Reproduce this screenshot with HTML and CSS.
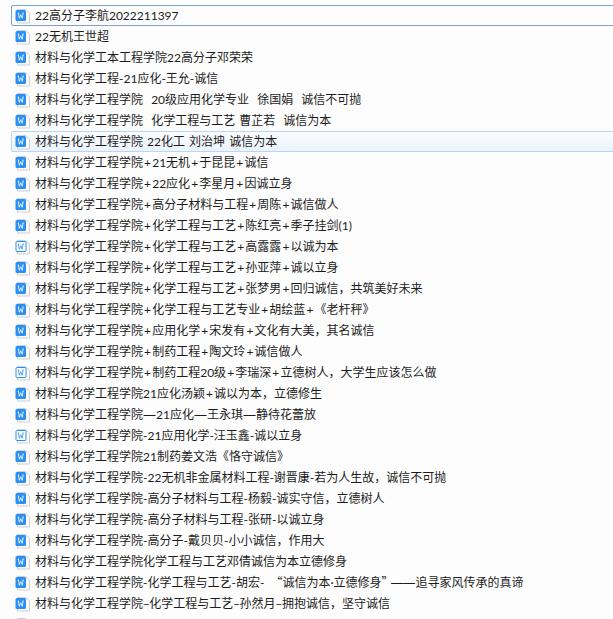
FILE: index.html
```html
<!DOCTYPE html>
<html lang="zh-CN">
<head>
<meta charset="utf-8">
<title>文件列表</title>
<link rel="stylesheet" href="styles.css">
</head>
<body>
<svg class="defs" width="0" height="0" aria-hidden="true">
  <symbol id="doc" viewBox="0 0 16 16">
    <path d="M2.500 1.500H10.500L14.500 5V15H2.500Z" fill="#fbfbfb" stroke="#cdd0d4"/>
    <rect x=".5" y="2" width="10.500" height="11" rx="1.500" fill="#2a8ff1"/>
    <path d="M2.800 5H4M7.500 5H8.700M3.400 5L4.300 10.300L5.750 6.600L7.200 10.300L8.100 5" fill="none" stroke="#fff" stroke-width=".8"/>
  </symbol>
  <symbol id="doc-outline" viewBox="0 0 16 16">
    <path d="M2.500 1.500H10.500L14.500 5V15H2.500Z" fill="#fbfbfb" stroke="#cdd0d4"/>
    <rect x="1" y="2.500" width="10" height="10" rx="1" fill="#fff" stroke="#2a8ff1"/>
    <path d="M2.800 5H4M7.500 5H8.700M3.400 5L4.300 10.300L5.750 6.600L7.200 10.300L8.100 5" fill="none" stroke="#2a8ff1" stroke-width=".8"/>
  </symbol>
</svg>
<ul class="list">
<li class="row focused"><svg class="icon"><use href="#doc"/></svg><span>22高分子李航2022211397</span></li>
<li class="row"><svg class="icon"><use href="#doc"/></svg><span>22无机王世超</span></li>
<li class="row"><svg class="icon"><use href="#doc"/></svg><span>材料与化学工本工程学院22高分子邓荣荣</span></li>
<li class="row"><svg class="icon"><use href="#doc"/></svg><span>材料与化学工程-21应化-王允-诚信</span></li>
<li class="row"><svg class="icon"><use href="#doc"/></svg><span>材料与化学工程学院&nbsp;&nbsp;20级应用化学专业&nbsp;&nbsp;徐国娟&nbsp;&nbsp;诚信不可抛</span></li>
<li class="row"><svg class="icon"><use href="#doc"/></svg><span>材料与化学工程学院&nbsp;&nbsp;化学工程与工艺 曹芷若&nbsp;&nbsp;诚信为本</span></li>
<li class="row hover"><svg class="icon"><use href="#doc"/></svg><span>材料与化学工程学院 22化工 刘治坤 诚信为本</span></li>
<li class="row"><svg class="icon"><use href="#doc"/></svg><span>材料与化学工程学院<i class="plus">+</i>21无机<i class="plus">+</i>于昆昆<i class="plus">+</i>诚信</span></li>
<li class="row"><svg class="icon"><use href="#doc"/></svg><span>材料与化学工程学院<i class="plus">+</i>22应化<i class="plus">+</i>李星月<i class="plus">+</i>因诚立身</span></li>
<li class="row"><svg class="icon"><use href="#doc"/></svg><span>材料与化学工程学院<i class="plus">+</i>高分子材料与工程<i class="plus">+</i>周陈<i class="plus">+</i>诚信做人</span></li>
<li class="row"><svg class="icon"><use href="#doc"/></svg><span>材料与化学工程学院<i class="plus">+</i>化学工程与工艺<i class="plus">+</i>陈红亮<i class="plus">+</i>季子挂剑(1)</span></li>
<li class="row"><svg class="icon"><use href="#doc-outline"/></svg><span>材料与化学工程学院<i class="plus">+</i>化学工程与工艺<i class="plus">+</i>高露露<i class="plus">+</i>以诚为本</span></li>
<li class="row"><svg class="icon"><use href="#doc"/></svg><span>材料与化学工程学院<i class="plus">+</i>化学工程与工艺<i class="plus">+</i>孙亚萍<i class="plus">+</i>诚以立身</span></li>
<li class="row"><svg class="icon"><use href="#doc"/></svg><span>材料与化学工程学院<i class="plus">+</i>化学工程与工艺<i class="plus">+</i>张梦男<i class="plus">+</i>回归诚信，共筑美好未来</span></li>
<li class="row"><svg class="icon"><use href="#doc"/></svg><span>材料与化学工程学院<i class="plus">+</i>化学工程与工艺专业<i class="plus">+</i>胡绘蓝<i class="plus">+</i>《老杆秤》</span></li>
<li class="row"><svg class="icon"><use href="#doc"/></svg><span>材料与化学工程学院<i class="plus">+</i>应用化学<i class="plus">+</i>宋发有<i class="plus">+</i>文化有大美，其名诚信</span></li>
<li class="row"><svg class="icon"><use href="#doc"/></svg><span>材料与化学工程学院<i class="plus">+</i>制药工程<i class="plus">+</i>陶文玲<i class="plus">+</i>诚信做人</span></li>
<li class="row"><svg class="icon"><use href="#doc-outline"/></svg><span>材料与化学工程学院<i class="plus">+</i>制药工程20级<i class="plus">+</i>李瑞深<i class="plus">+</i>立德树人，大学生应该怎么做</span></li>
<li class="row"><svg class="icon"><use href="#doc"/></svg><span>材料与化学工程学院21应化汤颖<i class="plus">+</i>诚以为本，立德修生</span></li>
<li class="row"><svg class="icon"><use href="#doc"/></svg><span>材料与化学工程学院<i class="dash">—</i>21应化<i class="dash">—</i>王永琪<i class="dash">—</i>静待花蕾放</span></li>
<li class="row"><svg class="icon"><use href="#doc-outline"/></svg><span>材料与化学工程学院-21应用化学-汪玉鑫-诚以立身</span></li>
<li class="row"><svg class="icon"><use href="#doc"/></svg><span>材料与化学工程学院21制药姜文浩《恪守诚信》</span></li>
<li class="row"><svg class="icon"><use href="#doc"/></svg><span>材料与化学工程学院-22无机非金属材料工程-谢晋康-若为人生故，诚信不可抛</span></li>
<li class="row"><svg class="icon"><use href="#doc"/></svg><span>材料与化学工程学院-高分子材料与工程-杨毅-诚实守信，立德树人</span></li>
<li class="row"><svg class="icon"><use href="#doc"/></svg><span>材料与化学工程学院-高分子材料与工程-张研-以诚立身</span></li>
<li class="row"><svg class="icon"><use href="#doc"/></svg><span>材料与化学工程学院-高分子-戴贝贝-小小诚信，作用大</span></li>
<li class="row"><svg class="icon"><use href="#doc"/></svg><span>材料与化学工程学院化学工程与工艺邓倩诚信为本立德修身</span></li>
<li class="row"><svg class="icon"><use href="#doc"/></svg><span>材料与化学工程学院-化学工程与工艺-胡宏-<i class="quote open">“</i>诚信为本·立德修身<i class="quote close">”</i><i class="dash">——</i>追寻家风传承的真谛</span></li>
<li class="row"><svg class="icon"><use href="#doc"/></svg><span>材料与化学工程学院<i class="en">–</i>化学工程与工艺<i class="en">–</i>孙然月<i class="en">–</i>拥抱诚信，坚守诚信</span></li>
<li class="row"><svg class="icon"><use href="#doc"/></svg><span></span></li>
</ul>
</body>
</html>
```

FILE: styles.css
```css
html, body {
  margin: 0;
  height: 100%;
  overflow: hidden;
  background: #fdfdfd;
}

.defs {
  display: block;
  height: 0;
}

.list {
  list-style: none;
  margin: 0 -8px 0 0;
  padding: 5px 0 0 11px;
  font: 12px/19px Lato, "Noto Sans CJK SC", sans-serif;
  word-spacing: 1px;
  text-spacing-trim: space-all;
  color: #1c1c1c;
}

.row {
  box-sizing: border-box;
  display: flex;
  align-items: center;
  gap: 4px;
  height: 21px;
  padding-left: 3px;
  border: 1px solid transparent;
  border-radius: 2px;
  white-space: pre;
}

.focused {
  border-color: #7da2ce;
}

.hover {
  border-color: #b8d6fb;
  background: linear-gradient(#fbfcfe, #ebf3fd);
}

.icon {
  flex: none;
  width: 16px;
  height: 16px;
}

.plus {
  font-style: normal;
  margin: 0 1.1px;
}

.dash {
  font-style: normal;
  font-family: "Liberation Sans", sans-serif;
  margin: 0 .5px;
}

.quote {
  font-style: normal;
  font-family: "Noto Sans CJK SC", sans-serif;
}

.open {
  margin-left: 6px;
}

.close {
  margin-right: -3px;
}

.en {
  font-style: normal;
  margin: 0 -.35px;
}
```
